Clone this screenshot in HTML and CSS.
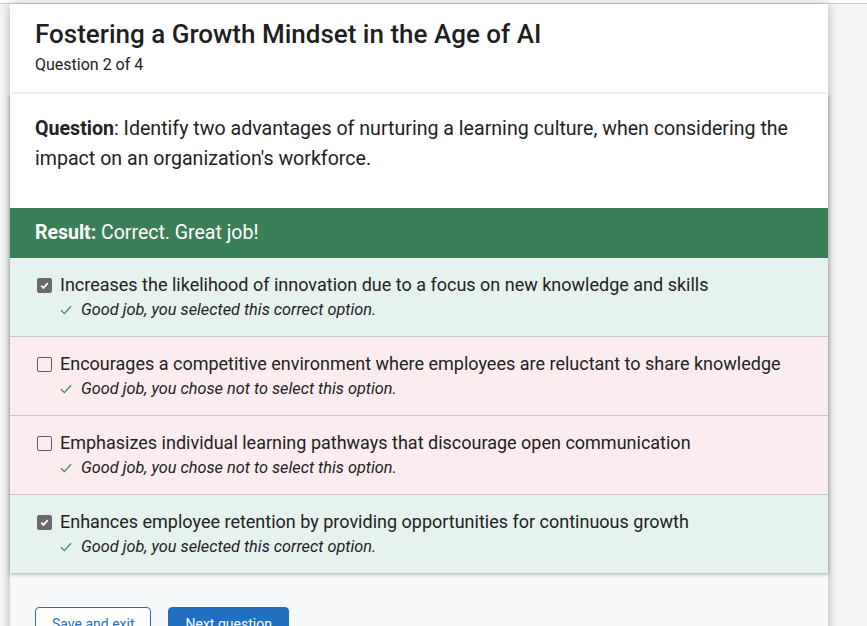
FILE: index.html
```html
<!DOCTYPE html>
<html lang="en">
<head>
    <meta charset="UTF-8">
    <meta name="viewport" content="width=device-width, initial-scale=1.0">
    <title>Quiz</title>
    <link rel="stylesheet" href="styles.css">
</head>
<body>
    <div class="topbar"></div>
    <div class="page">
        <div class="header">
            <h1>Fostering a Growth Mindset in the Age of AI</h1>
            <div class="counter">Question 2 of 4</div>
        </div>

        <div class="card">
            <div class="question">
                <b>Question</b>: Identify two advantages of nurturing a learning culture, when considering the impact on an organization's workforce.
            </div>
            <div class="result"><b>Result:</b> Correct. Great job!</div>

            <div class="option right">
                <div class="label"><span class="box checked"><svg viewBox="0 0 12 12"><path d="M3 6.2l2 2 4-4.4" /></svg></span>Increases the likelihood of innovation due to a focus on new knowledge and skills</div>
                <div class="feedback"><svg class="tick" viewBox="0 0 12 10"><path d="M1 5.2l3.4 3.4 6.6-7.4" /></svg>Good job, you selected this correct option.</div>
            </div>
            <div class="option wrong">
                <div class="label"><span class="box"></span>Encourages a competitive environment where employees are reluctant to share knowledge</div>
                <div class="feedback"><svg class="tick" viewBox="0 0 12 10"><path d="M1 5.2l3.4 3.4 6.6-7.4" /></svg>Good job, you chose not to select this option.</div>
            </div>
            <div class="option wrong">
                <div class="label"><span class="box"></span>Emphasizes individual learning pathways that discourage open communication</div>
                <div class="feedback"><svg class="tick" viewBox="0 0 12 10"><path d="M1 5.2l3.4 3.4 6.6-7.4" /></svg>Good job, you chose not to select this option.</div>
            </div>
            <div class="option right">
                <div class="label"><span class="box checked"><svg viewBox="0 0 12 12"><path d="M3 6.2l2 2 4-4.4" /></svg></span>Enhances employee retention by providing opportunities for continuous growth</div>
                <div class="feedback"><svg class="tick" viewBox="0 0 12 10"><path d="M1 5.2l3.4 3.4 6.6-7.4" /></svg>Good job, you selected this correct option.</div>
            </div>
        </div>

        <div class="actions">
            <button class="secondary">Save and exit</button>
            <button class="primary">Next question</button>
        </div>
    </div>
</body>
</html>
```

FILE: styles.css
```css
body {
    margin: 0;
    font-family: Roboto, "Liberation Sans", sans-serif;
    background: #f4f5f7;
    color: #222;
    overflow: hidden;
}
.topbar {
    height: 3px;
    background: #fff;
    border-bottom: 1px solid #c6cad2;
}
.page {
    width: 818px;
    margin-left: 10px;
    background: #f7f8fa;
    box-shadow: 0 0 10px rgba(0, 0, 0, 0.28);
    min-height: 640px;
}
.header {
    background: #fff;
    padding: 14px 25px 19px;
}
h1 {
    margin: 0;
    font-size: 26px;
    font-weight: 500;
    line-height: 32px;
    color: #1f1f1f;
}
.counter {
    font-size: 16px;
    line-height: 20px;
    margin-top: 5px;
    color: #222;
}
.card {
    background: #fff;
    box-shadow: 0 1px 4px rgba(0, 0, 0, 0.35);
}
.question {
    font-size: 19.6px;
    line-height: 30px;
    padding: 20px 18px 34px 25px;
}
.result {
    background: #3a7f58;
    color: #fff;
    font-size: 19.5px;
    height: 50px;
    line-height: 50px;
    padding: 0 25px;
}
.option {
    padding: 15px 25px 0 27px;
    height: 63px;
    border-bottom: 1px solid #c3c7cf;
}
.option:last-child {
    border-bottom: none;
}
.right {
    background: #e6f2ee;
}
.wrong {
    background: #fbecef;
}
.label {
    display: flex;
    align-items: center;
    font-size: 18px;
    line-height: 24px;
}
.box {
    width: 15px;
    height: 15px;
    border: 1.5px solid #5e5e5e;
    border-radius: 2px;
    margin-right: 8px;
    box-sizing: border-box;
    flex-shrink: 0;
}
.box.checked {
    background: #6a6a6a;
    border-color: #6a6a6a;
    display: flex;
}
.box svg {
    width: 100%;
    height: 100%;
    fill: none;
    stroke: #fff;
    stroke-width: 1.6;
}
.feedback {
    display: flex;
    align-items: center;
    font-size: 16.3px;
    font-style: italic;
    margin: 3px 0 0 23px;
    color: #222;
}
.tick {
    width: 12px;
    height: 10px;
    margin-right: 9px;
    fill: none;
    stroke: #3b8a5a;
    stroke-width: 1.3;
}
.actions {
    padding: 34px 25px;
    display: flex;
    gap: 17px;
}
button {
    font-family: Roboto, "Liberation Sans", sans-serif;
    font-size: 14px;
    height: 34px;
    padding: 0 16px;
    border-radius: 4px;
    cursor: pointer;
}
.secondary {
    background: #fff;
    border: 1px solid #2170c0;
    color: #2170c0;
}
.primary {
    background: #2170c0;
    border: 1px solid #2170c0;
    color: #fff;
}
```
